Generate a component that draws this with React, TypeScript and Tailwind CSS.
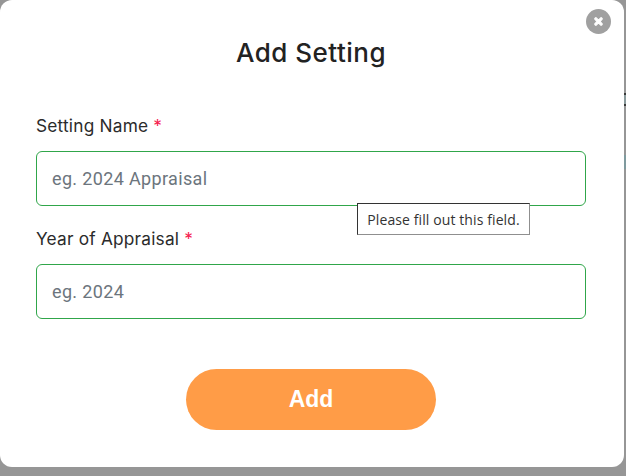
import { FaTimes } from "react-icons/fa";

function Field({
  label,
  placeholder,
  tooltip,
}: {
  label: string;
  placeholder: string;
  tooltip?: string;
}) {
  return (
    <div className="relative">
      <label className="block h-[24px] text-[17.3px] leading-[25px] tracking-[0.2px] text-[#2b2b2b] font-['Inter',sans-serif]">
        {label} <span className="text-[#f5214f]">*</span>
      </label>
      <input
        placeholder={placeholder}
        className="mt-[14px] block h-[55px] w-full rounded-[6px] border border-[#30a64a] bg-white px-[15px] text-[18px] tracking-[0.35px] text-[#2b2b2b] outline-none placeholder:text-[#6c757d] font-['Roboto',sans-serif]"
      />
      {tooltip && (
        <div className="absolute left-[321px] top-[90px] flex h-[32px] w-[173px] items-center justify-center border border-[#8f8f8f] border-l-[#333] border-t-[#333] bg-white text-[14px] tracking-[0.1px] text-[#333] font-['Open_Sans',sans-serif]">
          {tooltip}
        </div>
      )}
    </div>
  );
}

export default function App() {
  return (
    <div className="flex h-[476px] w-[626px] items-start overflow-hidden bg-[#969696]">
      <div className="relative flex h-[467px] w-[624px] flex-col rounded-[12px] bg-white pl-[36px] pr-[38px] pt-[34px]">
        <button className="absolute right-[13px] top-[9px] flex h-[25px] w-[25px] items-center justify-center rounded-full bg-[#a0a0a0] text-white">
          <FaTimes size={11} stroke="currentColor" strokeWidth={50} />
        </button>
        <h2 className="text-center text-[26px] leading-[38px] tracking-[0.5px] text-[#222] font-['Inter',sans-serif] font-medium">
          Add Setting
        </h2>
        <div className="mt-[41px] flex flex-col gap-[20px]">
          <Field
            label="Setting Name"
            placeholder="eg. 2024 Appraisal"
            tooltip="Please fill out this field."
          />
          <Field label="Year of Appraisal" placeholder="eg. 2024" />
        </div>
        <div className="mt-[50px] flex justify-center">
          <button className="h-[61px] w-[250px] rounded-[31px] bg-[#ff9c47] text-[23px] font-bold text-white font-['Liberation_Sans',sans-serif]">
            Add
          </button>
        </div>
      </div>
      {/* bits of the page behind the overlay, showing at the right edge */}
      <div className="flex w-[2px] flex-col gap-[49px] pt-[93px]">
        <div className="h-[13px] border-y-2 border-[#3a3a3a] bg-[#8a9a9c]" />
        <div className="h-[14px] bg-[#7f9a9e]" />
      </div>
    </div>
  );
}
